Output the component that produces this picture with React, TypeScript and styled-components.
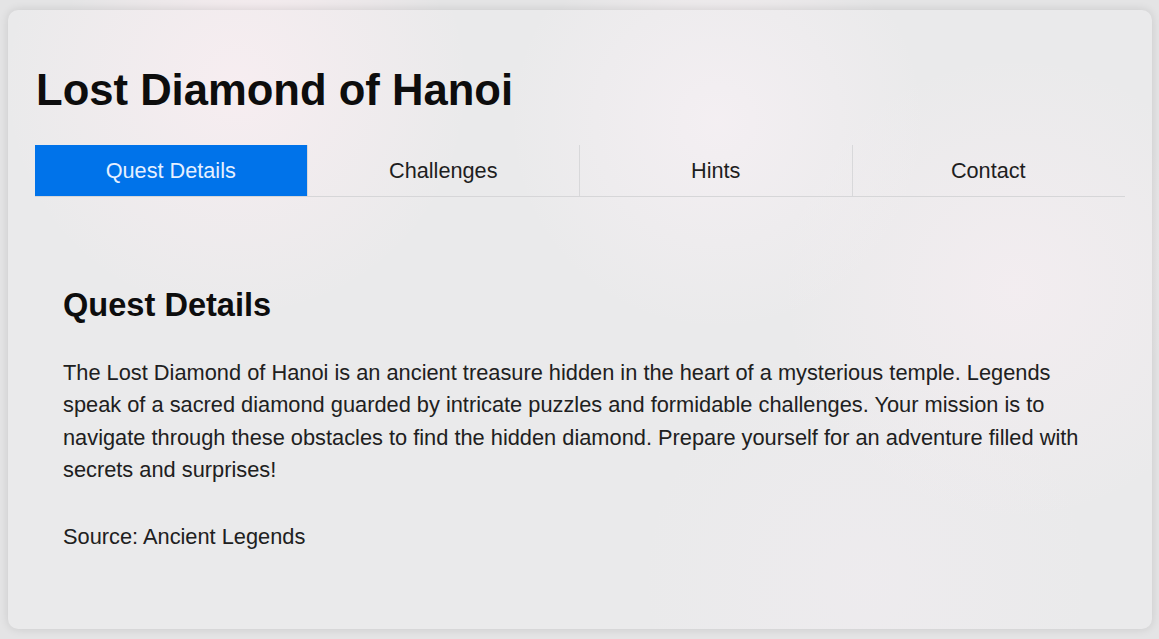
import React, { useState } from "react";
import styled, { createGlobalStyle } from "styled-components";

const GlobalStyle = createGlobalStyle`
  html, body {
    margin: 0;
    padding: 0;
    background: #e4e4e5;
    font-family: "Liberation Sans", Arial, sans-serif;
  }
`;

const Page = styled.div`
  min-height: 639px;
  box-sizing: border-box;
  padding: 10px 7px 10px 8px;
  background:
    radial-gradient(circle at 22% 8%, rgba(255, 240, 244, 0.7), transparent 18%),
    radial-gradient(circle at 62% 14%, rgba(255, 245, 248, 0.6), transparent 20%),
    radial-gradient(circle at 86% 40%, rgba(255, 242, 246, 0.6), transparent 18%),
    #e4e4e5;
`;

const Card = styled.div`
  box-sizing: border-box;
  padding: 27px 27px 25px 28px;
  border-radius: 10px;
  background:
    radial-gradient(circle at 20% 12%, rgba(250, 238, 242, 0.8), transparent 22%),
    radial-gradient(circle at 62% 18%, rgba(246, 240, 244, 0.8), transparent 24%),
    radial-gradient(circle at 88% 45%, rgba(246, 238, 242, 0.7), transparent 22%),
    radial-gradient(circle at 75% 92%, rgba(240, 236, 240, 0.6), transparent 22%),
    #eaeaeb;
  box-shadow: 0 0 10px rgba(0, 0, 0, 0.12);
  min-height: 619px;
`;

const Title = styled.h1`
  margin: 28px 0 30px;
  font-size: 43.6px;
  line-height: 50px;
  font-weight: 700;
  color: #0d0d0d;
`;

const TabBar = styled.div`
  display: grid;
  grid-template-columns: repeat(4, 1fr);
  margin-left: -1px;
  border-bottom: 1px solid #d6d6d8;
`;

const Tab = styled.button<{ $active: boolean; $last: boolean }>`
  height: 51px;
  border: none;
  border-right: 1px solid ${(p) => (p.$last ? "transparent" : "#d8d8da")};
  background: ${(p) => (p.$active ? "#0073ea" : "transparent")};
  color: ${(p) => (p.$active ? "#e6f0ff" : "#1e1e1e")};
  font-family: "Liberation Sans", Arial, sans-serif;
  font-size: 21.7px;
  line-height: 25px;
  padding: 0;
  cursor: pointer;
`;

const Panel = styled.section`
  padding: 27px 27px 0;
  margin-top: 27px;
`;

const Heading = styled.h2`
  margin: 35px 0 34px;
  font-size: 32.6px;
  line-height: 37px;
  font-weight: 700;
  color: #0d0d0d;
`;

const Text = styled.p<{ $gap?: number }>`
  margin: 0 0 ${(p) => p.$gap ?? 0}px;
  font-size: 21.8px;
  line-height: 32.4px;
  color: #202020;
`;

const tabs = ["Quest Details", "Challenges", "Hints", "Contact"];

export default function App() {
  const [active, setActive] = useState(0);
  return (
    <Page>
      <GlobalStyle />
      <Card>
        <Title>Lost Diamond of Hanoi</Title>
        <TabBar>
          {tabs.map((t, i) => (
            <Tab
              key={t}
              $active={i === active}
              $last={i === tabs.length - 1}
              onClick={() => setActive(i)}
            >
              {t}
            </Tab>
          ))}
        </TabBar>
        <Panel>
          <Heading>Quest Details</Heading>
          <Text $gap={34}>
            The Lost Diamond of Hanoi is an ancient treasure hidden in the heart of a
            mysterious temple. Legends speak of a sacred diamond guarded by intricate
            puzzles and formidable challenges. Your mission is to navigate through these
            obstacles to find the hidden diamond. Prepare yourself for an adventure
            filled with secrets and surprises!
          </Text>
          <Text>Source: Ancient Legends</Text>
        </Panel>
      </Card>
    </Page>
  );
}
